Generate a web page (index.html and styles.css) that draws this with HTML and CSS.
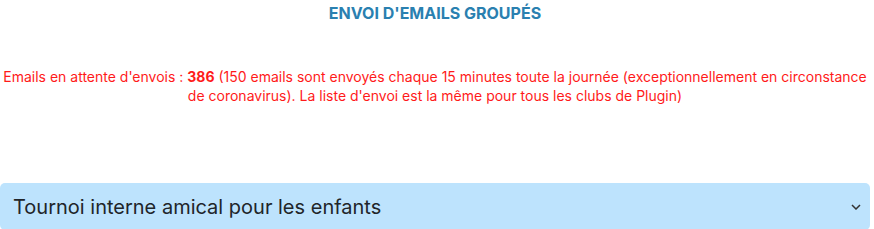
FILE: index.html
```html
<!DOCTYPE html>
<html lang="fr">
<head>
    <meta charset="UTF-8">
    <title>Envoi d'emails groupés</title>
    <link rel="stylesheet" href="styles.css">
</head>
<body>
    <div class="page">
        <h2 class="title">ENVOI D'EMAILS GROUPÉS</h2>

        <p class="notice">
            Emails en attente d'envois : <b>386</b> (150 emails sont envoyés chaque 15 minutes toute la journée (exceptionnellement en circonstance de coronavirus). La liste d'envoi est la même pour tous les clubs de Plugin)
        </p>

        <div class="accordion">
            <div class="accordion-header">
                <span>Tournoi interne amical pour les enfants</span>
                <svg class="chevron" width="10" height="6" viewBox="0 0 10 6">
                    <path d="M1 1 L5 5 L9 1" fill="none" stroke="#333" stroke-width="1.5"/>
                </svg>
            </div>
        </div>
    </div>
</body>
</html>
```

FILE: styles.css
```css
body {
    margin: 0;
    padding: 0;
    background: white;
    font-family: Inter, "Noto Sans", Arial, sans-serif;
}

.page {
    width: 870px;
}

/* Title */
.title {
    margin: 0;
    padding-top: 3px;
    text-align: center;
    font-size: 16px;
    line-height: 20px;
    font-weight: bold;
    color: #2a80b0;
}

/* Notice */
.notice {
    margin: 44px 0 0;
    text-align: center;
    font-size: 14px;
    line-height: 19px;
    color: #ff1a1a;
}

/* Accordion */
.accordion {
    margin-top: 78px;
}

.accordion-header {
    display: flex;
    justify-content: space-between;
    align-items: center;
    background: #bde3fd;
    border-radius: 5px;
    padding: 10px 9px 10px 13px;
    height: 27px;
    font-size: 20px;
    color: #212529;
}
```
